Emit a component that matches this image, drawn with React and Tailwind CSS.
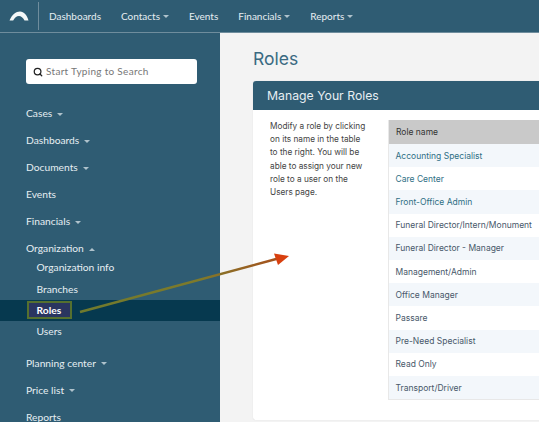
import React from "react";
import { Search } from "lucide-react";

const Caret = ({ up, className = "ml-[5px]" }) => (
  <svg width="6" height="3" viewBox="0 0 6 3" className={`opacity-70 ${className}`}>
    <path d={up ? "M0 3 L3 0 L6 3 Z" : "M0 0 L6 0 L3 3 Z"} fill="currentColor" />
  </svg>
);

const TopItem = ({ label, caret }) => (
  <div className="flex items-center text-[10px] text-[#e6eef2]">
    {label}
    {caret && <Caret className="ml-[3px]" />}
  </div>
);

const SideItem = ({ label, caret, up }) => (
  <div className="flex items-center h-[27px] pl-[26px] text-[10.25px] text-[#e6eef2]">
    {label}
    {caret && <Caret up={up} />}
  </div>
);

const SubItem = ({ label, active }) => (
  <div className={`relative flex items-center h-[21.3px] pl-[36.5px] text-[10.25px] ${active ? "bg-[#06394f] font-bold text-white" : "text-[#e6eef2]"}`}>
    {active && <div className="absolute left-[27px] top-[1px] w-[45px] h-[18px] border-[2px] border-[#55702f] bg-[#2a3560]" />}
    <span className="relative">{label}</span>
  </div>
);

const roles = [
  ["Accounting Specialist", true],
  ["Care Center", true],
  ["Front-Office Admin", true],
  ["Funeral Director/Intern/Monument"],
  ["Funeral Director - Manager"],
  ["Management/Admin"],
  ["Office Manager"],
  ["Passare"],
  ["Pre-Need Specialist"],
  ["Read Only"],
  ["Transport/Driver"],
];

export default function App() {
  return (
    <div className="relative w-[539px] h-[422px] overflow-hidden bg-[#f3f3f3] font-['Lato',sans-serif]">
      <header className="flex items-center h-[33px] bg-[#2f5c73] border-b border-[#6f8d9d]">
        <div className="flex items-center justify-center w-[39px] h-[28px] border-r border-[#6f8d9d]">
          <svg width="20" height="10" viewBox="0 0 20 10">
            <path d="M0.5 9.5 C3 3.5 7 0.5 11 0.5 C15 0.5 18 4 19.5 9.5 L15.5 9.5 C14 6.5 12 5 10 5 C7.5 5 5.5 6.8 4.2 9.5 Z" fill="#f4f7f8" />
          </svg>
        </div>
        <nav className="flex items-center gap-[20px] pl-[10px] pt-[1px]">
          <TopItem label="Dashboards" />
          <TopItem label="Contacts" caret />
          <TopItem label="Events" />
          <TopItem label="Financials" caret />
          <TopItem label="Reports" caret />
        </nav>
      </header>
      <div className="flex h-[389px]">
        <aside className="w-[220px] shrink-0 bg-[#2f5c73] overflow-hidden">
          <div className="pt-[26px] pl-[26px]">
            <div className="flex items-center w-[171px] h-[25px] bg-white rounded-[3px] pl-[7px]">
              <Search size={10} strokeWidth={3} className="text-[#222]" />
              <span className="ml-[3px] text-[10px] tracking-[0.3px] text-[#777]">Start Typing to Search</span>
            </div>
          </div>
          <div className="mt-[16.5px]">
            <SideItem label="Cases" caret />
            <SideItem label="Dashboards" caret />
            <SideItem label="Documents" caret />
            <SideItem label="Events" />
            <SideItem label="Financials" caret />
            <SideItem label="Organization" caret up />
            <div className="-mt-[5px] mb-[7px]">
              <SubItem label="Organization info" />
              <SubItem label="Branches" />
              <SubItem label="Roles" active />
              <SubItem label="Users" />
            </div>
            <SideItem label="Planning center" caret />
            <SideItem label="Price list" caret />
            <SideItem label="Reports" />
          </div>
        </aside>
        <main className="flex-1 min-w-0 pl-[33px] font-['Inter',sans-serif]">
          <h1 className="h-[48px] pt-[14px] text-[17.5px] leading-[24px] text-[#3a6a82]">Roles</h1>
          <section className="w-[320px] h-[339px] bg-white rounded-[3px] shadow-[0_0_1px_#ccc]">
            <div className="flex items-center h-[29px] pl-[14px] pt-[1px] bg-[#2f5c73] rounded-t-[3px] text-[12.25px] text-[#e6eef2]">Manage Your Roles</div>
            <div className="flex pt-[10px]">
              <p className="w-[135px] shrink-0 pl-[17px] pr-[18px] text-[8.25px] leading-[13.2px] text-[#444]">
                Modify a role by clicking on its name in the table to the right. You will be able to assign your new role to a user on the Users page.
              </p>
              <div className="flex-1 border-l border-b border-[#e8e8e8]">
                <div className="flex items-center h-[24px] pl-[7px] pt-[1px] bg-[#c9c9c9] text-[8.5px] text-[#333]">Role name</div>
                {roles.map(([name, link], i) => (
                  <div
                    key={name}
                    className={`flex items-center h-[23.2px] pl-[6.5px] pt-[1px] text-[8.5px] ${i % 2 === 0 ? "bg-[#f3f7fb]" : "bg-white"} ${link ? "text-[#2f6f85]" : "text-[#48586a]"}`}
                  >
                    {name}
                  </div>
                ))}
              </div>
            </div>
          </section>
        </main>
      </div>
      <svg className="absolute left-0 top-0 pointer-events-none" width="539" height="422" viewBox="0 0 539 422">
        <defs>
          <linearGradient id="arrowLine" gradientUnits="userSpaceOnUse" x1="80" y1="312" x2="280" y2="258">
            <stop offset="0" stopColor="#6f7a2d" />
            <stop offset="0.6" stopColor="#7f7a2a" />
            <stop offset="1" stopColor="#a8501c" />
          </linearGradient>
        </defs>
        <line x1="80" y1="312" x2="278" y2="258.5" stroke="url(#arrowLine)" strokeWidth="2.4" />
        <polygon points="274,253.5 289,256 278,265" fill="#d8400f" />
      </svg>
    </div>
  );
}
